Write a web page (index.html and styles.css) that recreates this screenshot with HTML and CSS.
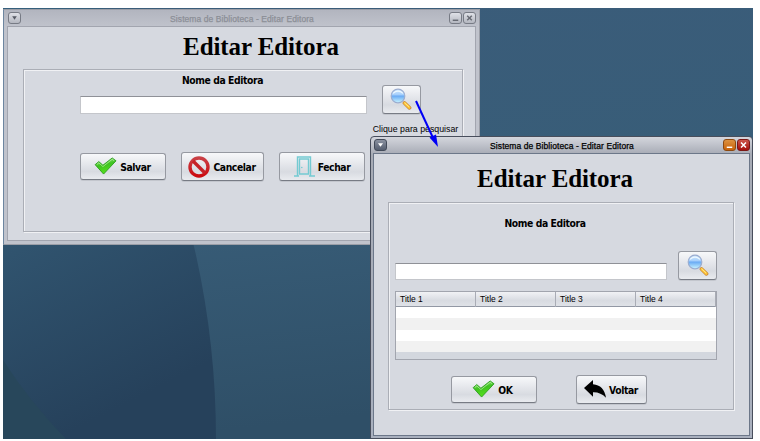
FILE: index.html
```
<!DOCTYPE html>
<html lang="pt-BR">
<head>
<meta charset="utf-8">
<title>Sistema de Biblioteca</title>
<link rel="stylesheet" href="styles.css">
</head>
<body>
<svg class="defs" width="0" height="0" aria-hidden="true">
  <defs>
    <linearGradient id="green" x1="0" y1="0" x2="0.3" y2="1"><stop offset="0" stop-color="#b5f39a"/><stop offset=".5" stop-color="#3fc321"/><stop offset="1" stop-color="#55e01c"/></linearGradient>
    <linearGradient id="red" x1="0" y1="0" x2="0" y2="1"><stop offset="0" stop-color="#c94046"/><stop offset="1" stop-color="#cc0b10"/></linearGradient>
    <linearGradient id="lens" x1="0" y1="0" x2="0" y2="1"><stop offset="0" stop-color="#d4ebff"/><stop offset=".42" stop-color="#a3cdfb"/><stop offset=".5" stop-color="#69aaf4"/><stop offset="1" stop-color="#c9f5ff"/></linearGradient>
    <linearGradient id="dark" x1="0" y1="0" x2="0.25" y2="1"><stop offset="0" stop-color="#36607d"/><stop offset=".5" stop-color="#315570"/><stop offset="1" stop-color="#26415b"/></linearGradient>
    <linearGradient id="light" x1="0" y1="0" x2="0.2" y2="1"><stop offset="0" stop-color="#3b5c7a"/><stop offset=".5" stop-color="#385d78"/><stop offset="1" stop-color="#2f4f67"/></linearGradient>
    <symbol id="check" viewBox="0 0 24 18"><path d="M1.2 7.6 5 4.4l4.3 3.8L19 .6l4 3L10 17.4Z" fill="url(#green)" stroke="#259b19" stroke-width=".9" stroke-linejoin="round"/><path d="m3 7.4 2-1.6 4.3 3.8L19 2l2 1.5" fill="none" stroke="#c9f7b5" stroke-width=".8" opacity=".8"/></symbol>
    <symbol id="search" viewBox="0 0 22 22"><path d="m14.5 15 5 4.8" stroke="#c98a3a" stroke-width="3.8" stroke-linecap="round"/><path d="m14.7 15.2 4.6 4.4" stroke="#ffc536" stroke-width="2.5" stroke-linecap="round"/><path d="m14.5 14.8 4.5 4" stroke="#fff0a0" stroke-width=".8"/><circle cx="8" cy="8" r="6.8" fill="url(#lens)" stroke="#9badd0" stroke-width="1.2"/><path d="M3 5.4Q8 1 13 5.4" fill="none" stroke="#edf8ff" stroke-width="1.2"/></symbol>
  </defs>
</svg>
<main class="desktop">
  <svg class="wallpaper" viewBox="0 0 750 431" aria-hidden="true">
    <rect width="750" height="431" fill="url(#light)"/>
    <path d="M0 0H100Q213 210 213 431H0Z" fill="url(#dark)"/>
    <path d="M0 352Q26 393 63 431H0Z" fill="#28475b"/>
  </svg>

  <section class="window inactive">
    <header class="titlebar">
      <span class="control menu"><svg viewBox="0 0 12 10"><path d="M3.5 3h5L6 7Z"/></svg></span>
      <span class="caption">Sistema de Biblioteca - Editar Editora</span>
      <span class="control"><svg viewBox="0 0 12 10"><path class="line" d="M3 7.5h6"/></svg></span>
      <span class="control"><svg viewBox="0 0 12 10"><path class="line" d="m3.5 2.5 5 5m0-5-5 5"/></svg></span>
    </header>
    <div class="content">
      <h1>Editar Editora</h1>
      <div class="panel">
        <div class="lookup">
          <label class="field"><span>Nome da Editora</span><input type="text"></label>
          <div class="finder"><button class="find" aria-label="Pesquisar"><svg><use href="#search"/></svg></button><span class="hint">Clique para pesquisar</span></div>
        </div>
        <div class="actions">
          <button class="save"><svg class="tick"><use href="#check"/></svg><span>Salvar</span></button>
          <button class="cancel"><svg class="ban" viewBox="0 0 22 22"><circle cx="11" cy="11" r="9" fill="none" stroke="url(#red)" stroke-width="3.4"/><path d="m5 5 12 12" stroke="#c62228" stroke-width="3.4"/></svg><span>Cancelar</span></button>
          <button class="close"><svg class="door" viewBox="0 0 22 21"><path d="M4.5 20V1h13v19M6.5 18V3h9v15ZM1 20h5m10 0h6" fill="none" stroke="#74cad2" stroke-width="1.4"/><circle cx="8.8" cy="11.5" r=".8" fill="#74cad2"/></svg><span>Fechar</span></button>
        </div>
      </div>
    </div>
  </section>

  <section class="window active">
    <header class="titlebar">
      <span class="control menu"><svg viewBox="0 0 12 10"><path d="M3.2 3h5.6L6 7Z"/></svg></span>
      <span class="caption">Sistema de Biblioteca - Editar Editora</span>
      <span class="control minimize"><svg viewBox="0 0 12 10"><path class="line" d="M3 7.5h6"/></svg></span>
      <span class="control quit"><svg viewBox="0 0 12 10"><path class="line" d="m3.3 2.2 5.4 5.6m0-5.6L3.3 7.8"/></svg></span>
    </header>
    <div class="content">
      <h1>Editar Editora</h1>
      <div class="panel">
        <div class="lookup">
          <label class="field"><span>Nome da Editora</span><input type="text"></label>
          <button class="find" aria-label="Pesquisar"><svg><use href="#search"/></svg></button>
        </div>
        <div class="table">
          <div class="row head"><span>Title 1</span><span>Title 2</span><span>Title 3</span><span>Title 4</span></div>
          <div class="row"></div><div class="row alt"></div><div class="row"></div><div class="row alt"></div>
        </div>
        <div class="actions">
          <button class="ok"><svg class="tick"><use href="#check"/></svg><span>OK</span></button>
          <button class="back"><svg class="reply" viewBox="0 0 22 18"><path d="M0 8 9 0v4.2Q20 5 22 17.8 16.5 12 9 12.3v4.5Z"/></svg><span>Voltar</span></button>
        </div>
      </div>
    </div>
  </section>

  <svg class="pointer" viewBox="0 0 26 50" aria-hidden="true"><path d="m2 2 18 39" stroke="#0000f5" stroke-width="2"/><path d="m24 48-8.5-9.5 6.5-3Z" fill="#0000f5"/></svg>
</main>
</body>
</html>
```
FILE: styles.css
```
* { box-sizing: border-box; }
body { margin: 0; width: 760px; height: 441px; overflow: hidden; background: #fff; font-family: "Liberation Sans", Arial, sans-serif; color: #000; }
.defs { position: absolute; }
.desktop { position: relative; width: 750px; height: 431px; margin: 8px 0 0 3px; overflow: hidden; }
.wallpaper { display: block; width: 750px; height: 431px; }

.window { position: absolute; display: flex; flex-direction: column; background: #c2c5ce; }
.inactive { left: 0; top: 1px; width: 477px; height: 236px; padding: 0 3px 3px; border: 1px solid #9b9ea7; border-left-color: #6d86a0; background: linear-gradient(#b2b5bf, #c0c3cc 17px); }
.active { left: 367px; top: 128px; width: 383px; height: 303px; padding: 0 2px 2px; border: 1px solid #484e5c; border-radius: 4px 4px 0 0; background: linear-gradient(#d4d6dd, #a7abb5 17px, #a9b0be); }
.titlebar { display: flex; align-items: center; flex: none; height: 16px; }
.caption { flex: 1; padding: 2px 0 0 15px; text-align: center; font-size: 8.5px; line-height: 18px; letter-spacing: .08px; white-space: nowrap; -webkit-text-stroke: .25px currentColor; }
.inactive .caption { color: #8c8f97; }
.control { width: 13px; height: 12px; margin-left: 1px; border: 1px solid #777b85; border-radius: 3px; background: linear-gradient(#dfe1e7, #b4b7c0); }
.control svg { display: block; width: 11px; height: 10px; fill: #555963; }
.control .line { stroke: #686b74; stroke-width: 1.6; fill: none; }
.active .menu { background: linear-gradient(#8a91a0, #555e70); border-color: #424a59; }
.active .menu svg { fill: #fff; }
.active .line { stroke: #fff; }
.active .minimize { background: linear-gradient(#dc913f, #c96208); border-color: #8d490f; }
.active .quit { background: linear-gradient(#cc5549, #a50f0a); border-color: #7b1715; }
.content { flex: 1; border: 1px solid #a2a5af; background: #d6d9e0; }
.active .content { border-color: #6c7789; }

h1 { margin: 0; font: bold 25px/30px "Liberation Serif", "Times New Roman", serif; letter-spacing: -.1px; text-align: center; white-space: nowrap; }
.panel { display: flex; flex-direction: column; border: 1px solid #abaeb6; box-shadow: 1px 1px 0 #f0f1f4, inset 1px 1px 0 #f0f1f4; }
.inactive h1 { padding: 5px 0 0 39px; }
.inactive .panel { margin: 7px 0 0 15px; width: 440px; height: 163px; }
.active h1 { padding: 10px 0 0; margin-left: -13px; }
.active .panel { margin: 8px 0 0 14px; width: 346px; height: 208px; }

.field, button { font: bold 10.3px/14px "DejaVu Sans Condensed", "DejaVu Sans", sans-serif; letter-spacing: -.4px; }
.field { display: flex; flex-direction: column; align-items: center; }
input { appearance: none; outline: 0; padding: 0; border: 1px solid #c4c6cb; border-top-color: #8f9197; border-radius: 0; background: #fff; }
button { display: flex; align-items: center; justify-content: center; flex: none; padding: 0; color: #000; border: 1px solid #9699a1; border-bottom-color: #777b84; border-radius: 3px; box-shadow: 0 1px 0 #c3c6cd; background: linear-gradient(#f7f8fa, #e3e5ea 45%, #d8dbe1 70%, #e9ebef); }
.find { width: 39px; height: 29px; }
.find svg { width: 22px; height: 22px; margin-bottom: 1px; }
.tick { width: 23px; height: 18px; margin-bottom: 2px; }
.ban { width: 22px; height: 22px; }
.door { width: 22px; height: 21px; margin-bottom: 1px; }
.reply { width: 22px; height: 18px; margin-bottom: 1px; }

.inactive .lookup { display: flex; padding-left: 56px; height: 68px; }
.inactive .field { width: 287px; padding-top: 3px; }
.inactive .field span { margin-left: -2px; }
.inactive input { width: 287px; height: 18px; margin-top: 9px; }
.finder { display: flex; flex-direction: column; align-items: center; width: 85px; margin: 15px 0 0 6px; }
.finder .find { margin-right: 29px; }
.hint { margin-top: 9px; font-size: 8.8px; line-height: 12px; white-space: nowrap; }
.actions { display: flex; align-items: center; }
.inactive .actions { padding: 14px 0 0 56px; }
.actions svg { margin-right: 3px; }
.actions span { padding-right: 1px; }
.save { width: 86px; height: 27px; }
.cancel { width: 83px; height: 29px; margin-left: 15px; }
.close { width: 86px; height: 29px; margin-left: 15px; }

.active .lookup { display: flex; align-items: flex-end; gap: 11px; padding-left: 6px; height: 77px; }
.active .field { width: 272px; }
.active .field span { margin-left: 28px; }
.active input { width: 272px; height: 17px; margin-top: 33px; }
.table { width: 322px; height: 69px; margin: 11px 0 0 6px; border: 1px solid #a2a5ae; background: #d3d7de; }
.row { height: 11.25px; background: #fff; }
.row.alt { background: #f1f1f1; }
.row.head { display: grid; grid-template-columns: 80px 80px 80px 80px; height: 15px; border-bottom: 1px solid #9298a4; background: linear-gradient(#f1f2f5, #d8dbe1 60%, #dfe2e7); font-size: 8.5px; line-height: 15px; }
.head span { padding-left: 4px; border-right: 1px solid #a9acb5; }
.active .actions { padding: 15px 0 0 62px; }
.ok { width: 86px; height: 27px; }
.ok svg { margin-left: -2px; }
.back { width: 71px; height: 29px; margin-left: 39px; }

.pointer { position: absolute; left: 411px; top: 91px; width: 26px; height: 50px; }
```
